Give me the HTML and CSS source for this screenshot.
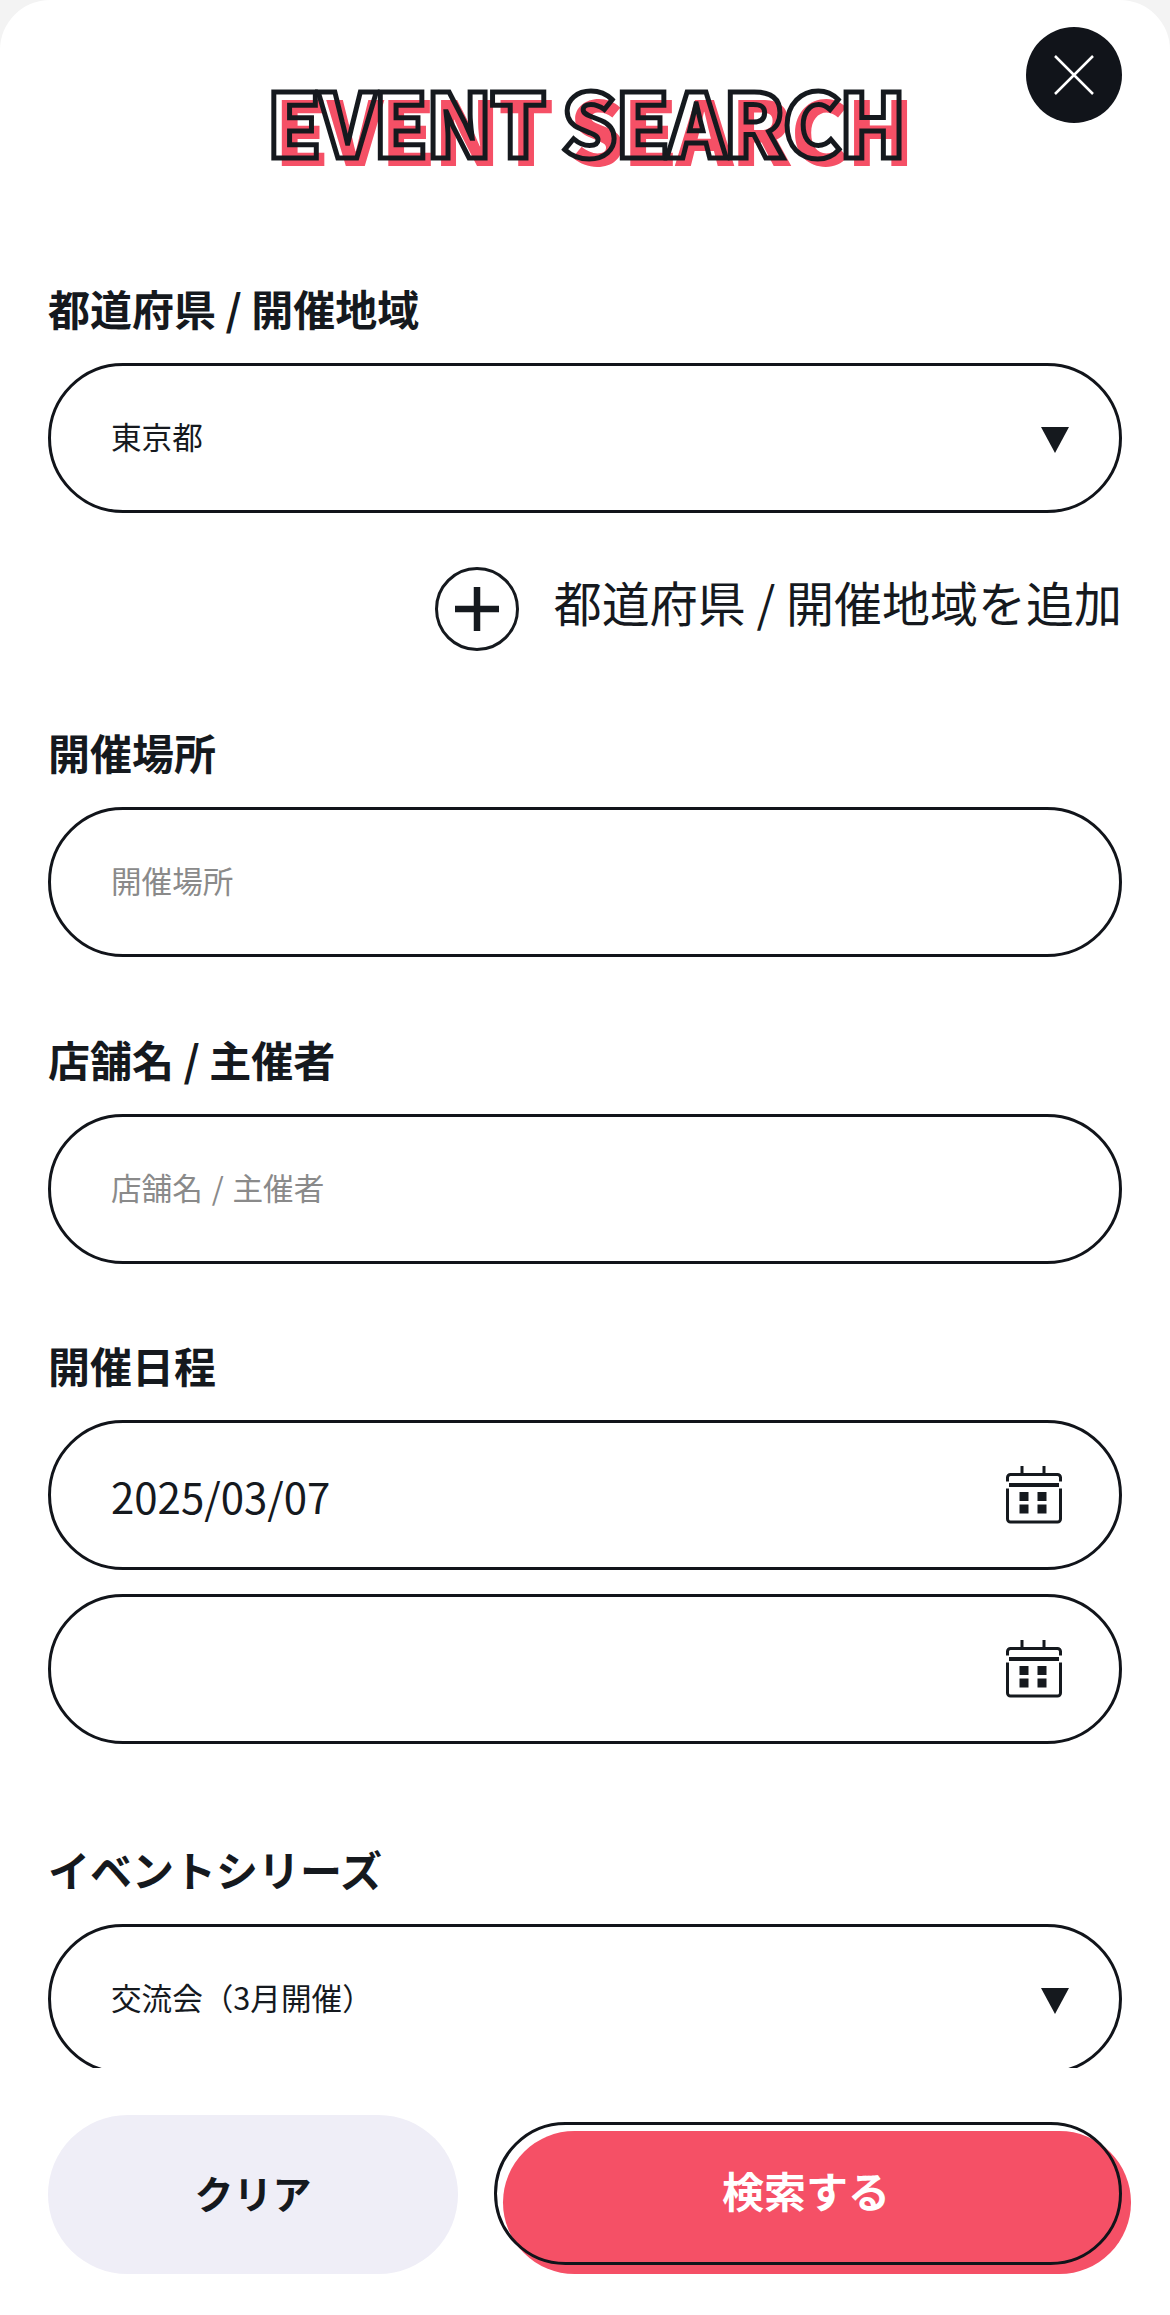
FILE: index.html
```html
<!DOCTYPE html>
<html lang="ja">
<head>
    <meta charset="UTF-8">
    <meta name="viewport" content="width=device-width, initial-scale=1.0">
    <title>Event Search</title>
    <link rel="stylesheet" href="styles.css">
</head>
<body>
    <div id="searchModal">
        <button type="button" class="closeButton" aria-label="閉じる">
            <svg viewBox="0 0 40 40" width="40" height="40">
                <path d="M1 1L39 39M39 1L1 39" stroke="#fff" stroke-width="2.5" fill="none"/>
            </svg>
        </button>

        <div class="scrollArea">
            <h1 class="modalTitle" data-text="EVENT SEARCH"><span>EVENT SEARCH</span></h1>

            <div class="field">
                <label class="fieldLabel">都道府県 / 開催地域</label>
                <div class="pill pillSelect">
                    <span>東京都</span>
                    <i class="arrow"></i>
                </div>
            </div>

            <div class="addRow">
                <span class="addIcon">
                    <svg viewBox="0 0 44 44" width="44" height="44">
                        <path d="M22 0V44M0 22H44" stroke="#15191e" stroke-width="6.5" fill="none"/>
                    </svg>
                </span>
                <span class="addText">都道府県 / 開催地域を追加</span>
            </div>

            <div class="field fieldPlace">
                <label class="fieldLabel">開催場所</label>
                <div class="pill pillSelect placeholder"><span>開催場所</span></div>
            </div>

            <div class="field fieldShop">
                <label class="fieldLabel">店舗名 / 主催者</label>
                <div class="pill pillSelect placeholder"><span>店舗名 / 主催者</span></div>
            </div>

            <div class="field fieldDate">
                <label class="fieldLabel">開催日程</label>
                <div class="pill pillDate">
                    <span>2025/03/07</span>
                    <svg class="calendar" viewBox="0 0 56 58" width="56" height="58">
                        <use href="#calendarIcon"/>
                    </svg>
                </div>
                <div class="pill pillDate">
                    <span></span>
                    <svg class="calendar" viewBox="0 0 56 58" width="56" height="58">
                        <use href="#calendarIcon"/>
                    </svg>
                </div>
            </div>

            <div class="field fieldSeries">
                <label class="fieldLabel">イベントシリーズ</label>
                <div class="pill pillSelect">
                    <span>交流会（3月開催）</span>
                    <i class="arrow"></i>
                </div>
            </div>
        </div>

        <div class="footerButtons">
            <button type="button" class="clearButton">クリア</button>
            <button type="button" class="searchButton"><span>検索する</span></button>
        </div>
    </div>

    <svg class="iconDefs" width="0" height="0">
        <defs>
            <g id="calendarIcon" fill="none" stroke="#15191e">
                <rect x="1.5" y="8.5" width="53" height="47.5" rx="3" stroke-width="3"/>
                <path d="M16 0V8M38 0V8" stroke-width="3"/>
                <path d="M0 19H56" stroke="#fff" stroke-width="7"/>
                <path d="M3 19H53" stroke-width="4"/>
                <path d="M13.5 26h9v9h-9zM31.5 26h9v9h-9zM13.5 38.5h9v9h-9zM31.5 38.5h9v9h-9z" fill="#15191e" stroke="none"/>
            </g>
        </defs>
    </svg>
</body>
</html>
```

FILE: styles.css
```css
* {
    box-sizing: border-box;
}

body {
    margin: 0;
    background-color: #f3f3f3;
    color: #15191e;
    font-family: 'Noto Sans CJK JP', 'Noto Sans', sans-serif;
}

#searchModal {
    position: relative;
    width: 1170px;
    height: 2315px;
    background-color: #fff;
    border-radius: 50px 50px 0 0;
    overflow: hidden;
}

.iconDefs {
    position: absolute;
}

.closeButton {
    position: absolute;
    top: 27px;
    right: 48px;
    width: 96px;
    height: 96px;
    border: none;
    border-radius: 50%;
    background-color: #11141a;
    display: flex;
    align-items: center;
    justify-content: center;
    padding: 0;
}

.scrollArea {
    height: 2068px;
    padding: 0 48px;
    overflow: hidden;
}

.modalTitle {
    position: relative;
    margin: 0;
    padding-top: 65px;
    height: 278px;
    font-size: 88px;
    font-weight: 900;
    line-height: 110px;
    letter-spacing: -2.7px;
    text-align: center;
    white-space: nowrap;
    color: transparent;
}

.modalTitle::before {
    content: attr(data-text);
    position: absolute;
    left: 8px;
    right: -8px;
    top: 73px;
    color: #f55066;
}

.modalTitle span {
    position: relative;
    -webkit-text-stroke: 5px #15191e;
}

.fieldLabel {
    display: block;
    font-size: 42px;
    font-weight: 700;
    line-height: 60px;
    margin-bottom: 25px;
}

.pill {
    height: 150px;
    border: 3px solid #11141a;
    border-radius: 75px;
    display: flex;
    align-items: center;
    justify-content: space-between;
    padding: 0 50px 0 60px;
    background-color: #fff;
}

.pillSelect {
    font-size: 30.6px;
}

.pillSelect span {
    padding-bottom: 4px;
}

.placeholder {
    color: #8a8a8a;
    word-spacing: 2px;
}

.arrow {
    width: 0;
    height: 0;
    margin-top: 3px;
    border-left: 14px solid transparent;
    border-right: 14px solid transparent;
    border-top: 26px solid #15191e;
}

.pillDate {
    font-size: 42px;
    padding-right: 57px;
    margin-bottom: 24px;
}

.addRow {
    display: flex;
    justify-content: flex-end;
    align-items: center;
    gap: 35px;
    margin-top: 54px;
    font-size: 48px;
    line-height: 84px;
}

.addText {
    line-height: 60px;
    padding-bottom: 16px;
}

.addIcon {
    width: 84px;
    height: 84px;
    border: 3px solid #15191e;
    border-radius: 50%;
    display: flex;
    align-items: center;
    justify-content: center;
}

.fieldPlace {
    margin-top: 71px;
}

.fieldShop {
    margin-top: 72px;
}

.fieldDate {
    margin-top: 71px;
}

.fieldSeries {
    margin-top: 95px;
}

.footerButtons {
    display: flex;
    gap: 36px;
    padding: 47px 48px 0;
}

.clearButton {
    width: 410px;
    height: 159px;
    border: none;
    border-radius: 80px;
    background-color: #efeef7;
    color: #15191e;
    font-family: inherit;
    font-size: 39px;
    font-weight: 700;
    padding: 0 0 6px;
}

.searchButton {
    position: relative;
    width: 628px;
    height: 143px;
    margin-top: 7px;
    border: none;
    border-radius: 72px;
    background-color: transparent;
    color: #fff;
    font-family: inherit;
    font-size: 42px;
    font-weight: 700;
    padding: 0 4px 8px 0;
}

.searchButton::before {
    content: "";
    position: absolute;
    left: 9px;
    top: 9px;
    width: 628px;
    height: 143px;
    border-radius: 72px;
    background-color: #f55066;
}

.searchButton::after {
    content: "";
    position: absolute;
    inset: 0;
    border: 3px solid #11141a;
    border-radius: 72px;
}

.searchButton span {
    position: relative;
    z-index: 1;
}
```
